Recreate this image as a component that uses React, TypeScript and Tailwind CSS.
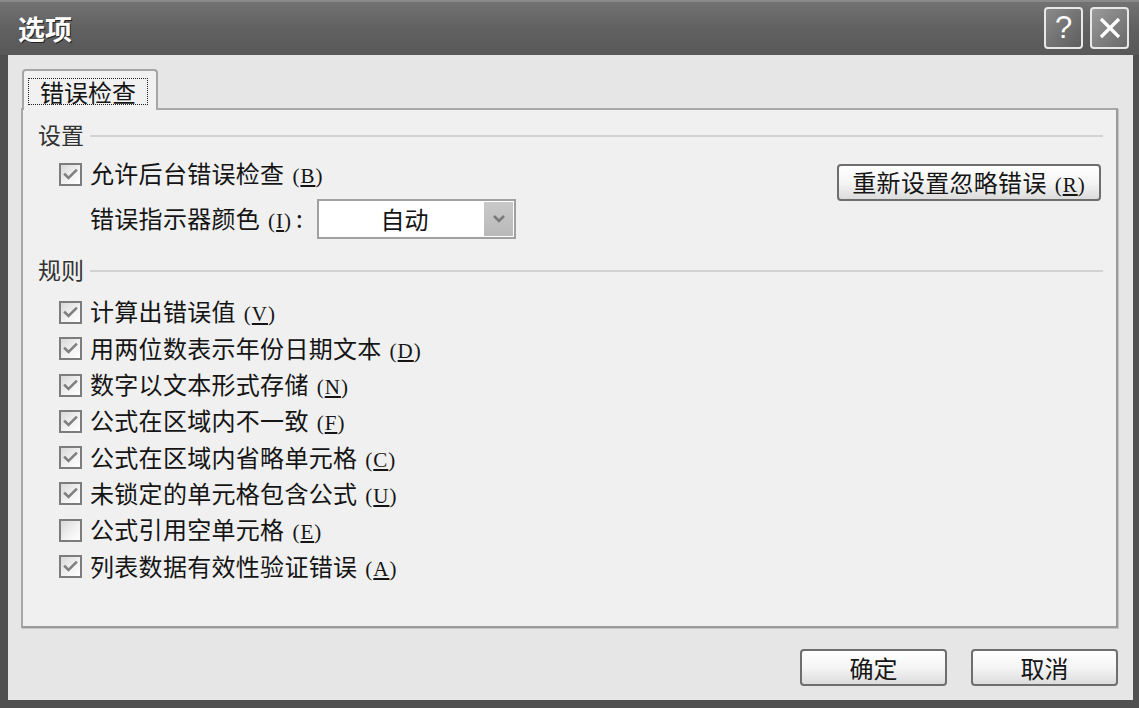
import React from "react";

const FONT = '"Noto Sans CJK SC", "Noto Sans", sans-serif';

function Mn({ k }: { k: string }) {
  return (
    <span className="text-[21px] ml-[8px] tracking-[1px]" style={{ fontFamily: '"Liberation Serif", serif' }}>
      (<span className="underline underline-offset-[2px]">{k}</span>)
    </span>
  );
}

function Check({ on }: { on: boolean }) {
  return (
    <svg width="23" height="23" viewBox="0 0 23 23" className="shrink-0">
      <defs>
        <linearGradient id="cbg" x1="0" y1="0" x2="1" y2="1">
          <stop offset="0" stopColor="#d6d6d6" />
          <stop offset="0.6" stopColor="#f4f4f4" />
          <stop offset="1" stopColor="#ffffff" />
        </linearGradient>
      </defs>
      <rect x="1" y="1" width="21" height="21" fill="url(#cbg)" stroke="#7c7c7c" strokeWidth="2" />
      {on && (
        <path d="M6 11.5 L9.5 15 L17 7.5" fill="none" stroke="#808080" strokeWidth="2.6" strokeLinecap="square" />
      )}
    </svg>
  );
}

function CheckRow({ on, label, k }: { on: boolean; label: string; k: string }) {
  return (
    <div className="flex items-center h-[36.3px] pl-[21px]">
      <Check on={on} />
      <span className="ml-[8px] text-[24px] leading-none text-[#151515] tracking-[0.3px]">
        {label}
        <Mn k={k} />
      </span>
    </div>
  );
}

function Btn({ children, w }: { children: React.ReactNode; w: string }) {
  return (
    <div
      className={`${w} h-[37px] rounded-[4px] border-2 border-[#6e6e6e] bg-gradient-to-b from-[#ffffff] via-[#f5f5f5] to-[#dcdcdc] flex items-center justify-center text-[24px] leading-none text-[#151515]`}
    >
      {children}
    </div>
  );
}

function Section({ title }: { title: string }) {
  return (
    <div className="flex items-center h-[24px]">
      <span className="text-[23px] leading-none text-[#333]">{title}</span>
      <div className="flex-1 h-[2px] bg-[#d2d2d2] ml-[6px] mt-[3px]" />
    </div>
  );
}

export default function App() {
  const rules: [boolean, string, string][] = [
    [true, "计算出错误值", "V"],
    [true, "用两位数表示年份日期文本", "D"],
    [true, "数字以文本形式存储", "N"],
    [true, "公式在区域内不一致", "F"],
    [true, "公式在区域内省略单元格", "C"],
    [true, "未锁定的单元格包含公式", "U"],
    [false, "公式引用空单元格", "E"],
    [true, "列表数据有效性验证错误", "A"],
  ];
  return (
    <div className="w-[1139px] h-[708px] bg-[#505050] flex flex-col" style={{ fontFamily: FONT }}>
      {/* title bar */}
      <div className="h-[55px] shrink-0 bg-gradient-to-b from-[#727272] via-[#616161] to-[#585858] flex items-center pl-[18px] pr-[10px] border-t-2 border-[#8a8a8a]">
        <span className="text-white text-[27px] font-bold leading-none" style={{ textShadow: "1px 1px 0 #222" }}>
          选项
        </span>
        <div className="flex-1" />
        <div className="flex gap-[7px] mt-[-2px]">
          <div className="w-[39px] h-[42px] rounded-[4px] border-2 border-[#e8e8e8] bg-gradient-to-br from-[#8a8a8a] to-[#5e5e5e] flex items-center justify-center">
            <span className="text-white text-[31px] leading-none" style={{ fontFamily: '"Liberation Sans", sans-serif' }}>?</span>
          </div>
          <div className="w-[39px] h-[42px] rounded-[4px] border-2 border-[#e8e8e8] bg-gradient-to-br from-[#9a9a9a] to-[#6a6a6a] flex items-center justify-center">
            <svg width="26" height="26" viewBox="0 0 26 26">
              <path d="M4 4 L22 22 M22 4 L4 22" stroke="#ffffff" strokeWidth="3.2" />
            </svg>
          </div>
        </div>
      </div>

      {/* body */}
      <div className="flex-1 ml-[8px] mr-[6px] mb-[8px] bg-[#e6e6e6] flex flex-col pl-[13px] pr-[15px] pt-[14px]">
        {/* tab strip */}
        <div className="flex relative z-10 h-[41px]">
          <div className="ml-[1px] w-[136px] h-[41px] rounded-t-[4px] border-2 border-b-0 border-[#a6a6a6] bg-[#f1f1f1] flex items-start pl-[4px] pt-[7px]">
            <div className="w-[120px] h-[27px] border border-dotted border-[#222] flex items-center justify-center text-[24px] leading-none text-[#151515]">
              错误检查
            </div>
          </div>
        </div>
        {/* panel */}
        <div className="mt-[-2px] h-[520px] border-2 border-[#a8a8a8] border-r-[#9a9a9a] border-b-[#9a9a9a] bg-[#f0f0f0] flex flex-col pl-[15px] pr-[13px] pt-[12px]" style={{ boxShadow: "1px 1px 0 #c6c6c6" }}>
          <Section title="设置" />
          <div className="flex">
            <div className="flex flex-col">
              <div className="mt-[10px]">
                <CheckRow on={true} label="允许后台错误检查" k="B" />
              </div>
              <div className="flex items-center h-[40px] mt-[7px] pl-[52px]">
                <span className="text-[24px] leading-none text-[#151515] tracking-[0.3px]">
                  错误指示器颜色
                  <Mn k="I" />
                  <span className="ml-[4px]">:</span>
                </span>
                <div className="ml-[14px] w-[199px] h-[40px] border-2 border-[#a0a0a0] bg-white flex items-center">
                  <span className="flex-1 text-center text-[24px] leading-none text-[#151515] pl-[6px]">自动</span>
                  <div className="w-[29px] h-[34px] mr-[1px] bg-gradient-to-b from-[#c9c9c9] to-[#b9b9b9] flex items-center justify-center">
                    <svg width="14" height="10" viewBox="0 0 14 10">
                      <path d="M2 2 L7 7 L12 2" fill="none" stroke="#7a7a7a" strokeWidth="2.6" />
                    </svg>
                  </div>
                </div>
              </div>
            </div>
            <div className="flex-1" />
            <div className="mt-[18px] mr-[2px]">
              <Btn w="w-[264px]">
                <span className="tracking-[0.3px]">
                  重新设置忽略错误
                  <Mn k="R" />
                </span>
              </Btn>
            </div>
          </div>
          <div className="mt-[18px]">
            <Section title="规则" />
          </div>
          <div className="mt-[13px] flex flex-col">
            {rules.map(([on, label, k]) => (
              <CheckRow key={label} on={on} label={label} k={k} />
            ))}
          </div>
        </div>
        {/* footer buttons */}
        <div className="flex justify-end gap-[24px] mt-[21px]">
          <Btn w="w-[147px]">确定</Btn>
          <Btn w="w-[147px]">取消</Btn>
        </div>
      </div>
    </div>
  );
}
